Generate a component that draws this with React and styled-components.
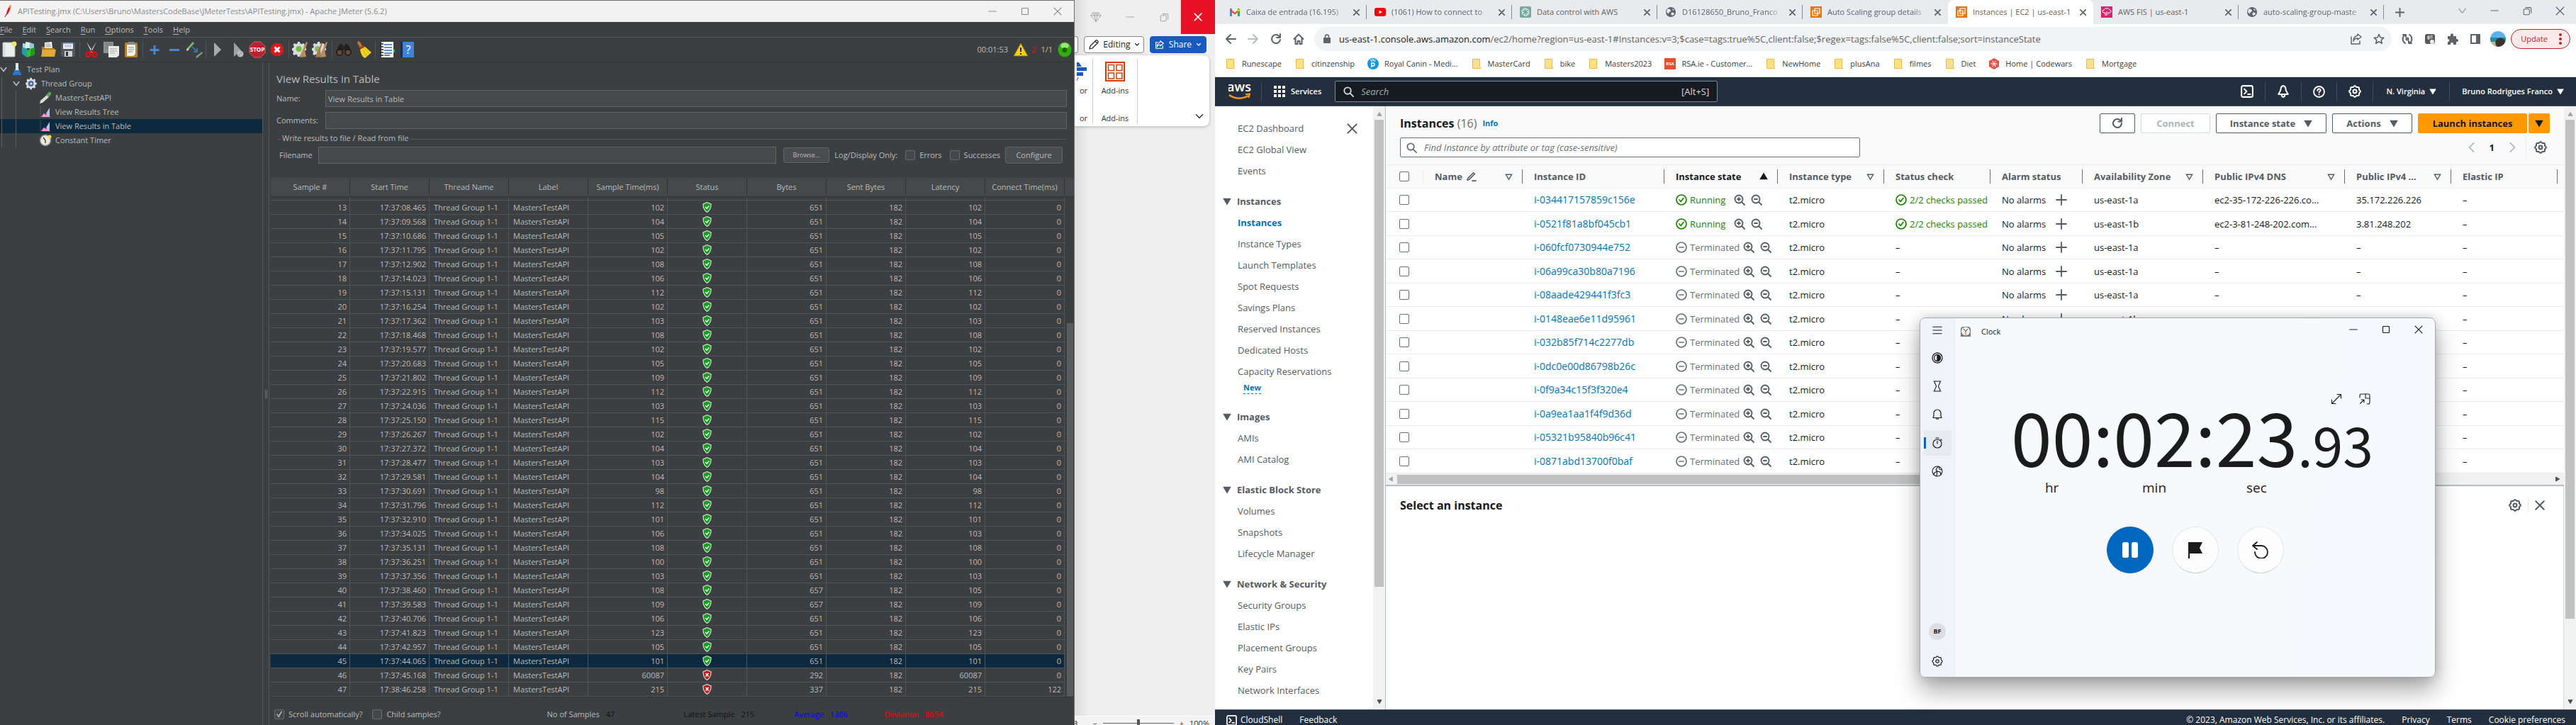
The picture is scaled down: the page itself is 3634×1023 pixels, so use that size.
import React from "react";
import styled, { createGlobalStyle, css } from "styled-components";

const GlobalStyle = createGlobalStyle`
  *, *::before, *::after { box-sizing: border-box; }
  body { margin: 0; font-family: "Open Sans", "Noto Sans", sans-serif; }
  button, input { font: inherit; color: inherit; }
  button { padding: 0; border: 0; background: none; cursor: pointer; white-space: nowrap; }
  a { color: inherit; text-decoration: none; white-space: nowrap; }
  svg { display: block; flex: none; }
`;

/* ---------- shared ---------- */

const Desktop = styled.div`
  display: grid;
  grid-template-columns: 1516fr 198fr 1920fr;
  height: 100vh;
  overflow: hidden;
  background: #eee;
`;

const Spacer = styled.div`
  flex: 1;
`;

const Stroke = ({ size = 16, w = 1.5, color = "currentColor", children, box = 16, join = "round" }) => (
  <svg width={size} height={size} viewBox={`0 0 ${box} ${box}`} fill="none" stroke={color} strokeWidth={w} strokeLinecap="round" strokeLinejoin={join} aria-hidden="true">
    {children}
  </svg>
);

const CrossIcon = ({ size = 10, w = 1.2 }) => (
  <Stroke size={size} w={w}><path d="M1.5 1.5l13 13M14.5 1.5l-13 13" vectorEffect="non-scaling-stroke" /></Stroke>
);
const MinIcon = () => <Stroke size={12} w={1.4}><path d="M1 8h14" /></Stroke>;
const MaxIcon = () => <Stroke size={12} w={1.5}><rect x="2" y="2" width="12" height="12" rx="1" /></Stroke>;
const RestoreIcon = () => (
  <Stroke size={13} w={1.3}><rect x="1.5" y="4.5" width="10" height="10" rx="2" /><path d="M5 2h7.5a2 2 0 0 1 2 2v7.5" /></Stroke>
);

const gearOutline = (() => {
  const pts = [];
  for (let i = 0; i <= 96; i += 1) {
    const a = (i / 96) * Math.PI * 2;
    const r = 6.4 + 0.6 * Math.cos(8 * a);
    pts.push(`${(8 + r * Math.cos(a)).toFixed(2)} ${(8 + r * Math.sin(a)).toFixed(2)}`);
  }
  return `M${pts.join("L")}Z`;
})();
const GearIcon = ({ size = 18, w = 1.8 }) => (
  <Stroke size={size} w={w}><path d={gearOutline} /><circle cx="8" cy="8" r="2.2" /></Stroke>
);

/* ---------- JMeter ---------- */

const JMeter = styled.section`
  display: flex;
  flex-direction: column;
  min-width: 0;
  overflow: hidden;
  border-right: 1px solid #6d6d6d;
  background: #3c3f41;
  color: #bbb;
  font-size: 11px;
  line-height: 16px;
`;

const JTitle = styled.header`
  display: flex;
  align-items: center;
  height: 31px;
  padding-left: 4px;
  border-top: 1px solid #6d6d6d;
  background: #f2f2f2;
  color: #8a8a8a;
`;

const JTitleText = styled.span`
  margin-left: 6px;
`;

const WinButton = styled.button`
  display: flex;
  align-items: center;
  justify-content: center;
  width: 46px;
  height: ${(p) => p.$h || 30}px;
`;

const JMenu = styled.nav`
  display: flex;
  gap: 14px;
  height: 22px;
  border-bottom: 1px solid #555759;
  u { text-underline-offset: 2px; }
`;

const JToolbar = styled.div`
  display: flex;
  align-items: center;
  height: 35px;
  border-bottom: 1px solid #323435;
`;

const ToolGroup = styled.div`
  display: flex;
  & + & {
    margin-left: 2px;
    padding-left: 2px;
    border-left: 1px solid #515355;
  }
  &:first-child { margin-left: -2px; }
`;

const ToolButton = styled.button`
  display: flex;
  align-items: center;
  justify-content: center;
  width: 28px;
  height: 24px;
`;

const RunInfo = styled.div`
  display: flex;
  align-items: center;
  gap: 7px;
  margin-left: auto;
  padding-right: 3px;
`;

const ErrorCount = styled.span`
  margin-left: -3px;
  color: #f00;
`;

const JBody = styled.div`
  display: flex;
  flex: 1;
  min-height: 0;
`;

const Tree = styled.ul`
  width: 371px;
  margin: 0;
  padding: 0;
  border-right: 1px solid #555759;
  list-style: none;
`;

const TreeRow = styled.li`
  display: flex;
  align-items: center;
  height: 20px;
  background: ${(p) => (p.$on ? "#0d293e" : "none")};
`;

const Indent = styled.span`
  align-self: stretch;
  display: flex;
  align-items: center;
  width: ${(p) => p.$w}px;
  ${(p) => p.$line && css`
    margin-left: 2px;
    border-left: 1px solid #5a5d5f;
  `}
`;

const TreeIcon = styled.span`
  display: flex;
  justify-content: center;
  width: 24px;
  margin-right: 2px;
`;

const Splitter = styled.div`
  display: flex;
  align-items: center;
  justify-content: center;
  width: 9px;
  border-right: 1px solid #555759;
  &::before {
    content: "";
    width: 3px;
    height: 12px;
    border: solid #6f7274;
    border-width: 0 1px;
  }
`;

const Panel = styled.div`
  display: flex;
  flex: 1;
  flex-direction: column;
  min-width: 0;
`;

const PanelHeading = styled.h1`
  margin: 12px 10px 5px;
  font-size: 15px;
  font-weight: 400;
  line-height: 22px;
`;

const FieldRow = styled.label`
  display: flex;
  align-items: center;
  height: 24px;
  margin: 0 10px 7px;
`;

const FieldName = styled.span`
  width: ${(p) => p.$w}px;
`;

const JInput = styled.input`
  flex: 1;
  min-width: 0;
  height: 24px;
  padding: 0 3px;
  border: 1px solid #646464;
  background: #45494a;
  outline: none;
`;

const FileGroup = styled.fieldset`
  min-width: 0;
  margin: -2px 12px 20px 12px;
  padding: 2px 4px 0 2px;
  border: 0;
  border-top: 1px solid #555759;
  legend {
    height: 18px;
    margin-left: 2px;
    padding: 0 2px;
  }
`;

const FileRow = styled.div`
  display: flex;
  align-items: center;
  height: 24px;
`;

const FileLabel = styled.label`
  display: flex;
  flex: 1;
  align-items: center;
`;

const JButton = styled.button`
  width: ${(p) => (p.$small ? 65 : 81)}px;
  height: ${(p) => (p.$small ? 22 : 24)}px;
  margin: ${(p) => (p.$small ? "0 7px 0 10px" : "0 0 0 7px")};
  border: 1px solid #646464;
  border-radius: 3px;
  box-shadow: 0 1px 0 #2f3132;
  background: #4a4d4f;
  font-size: ${(p) => (p.$small ? 9 : 11)}px;
`;

const CheckLabel = styled.label`
  display: flex;
  align-items: center;
  gap: 6px;
  margin-left: ${(p) => p.$gap || 11}px;
  white-space: nowrap;
`;

const JCheck = styled.input`
  appearance: none;
  width: 14px;
  height: 14px;
  margin: 0;
  border: 1px solid #6b6b6b;
  border-radius: 2px;
  background: #43494a;
  &:checked::before {
    content: "";
    display: block;
    width: 12px;
    height: 12px;
    background: #bbb;
    clip-path: polygon(16% 48%, 26% 42%, 40% 66%, 74% 10%, 84% 16%, 42% 90%);
  }
`;

const TableArea = styled.div`
  display: flex;
  padding-left: 2px;
`;

const Results = styled.table`
  flex: 1;
  width: 100%;
  border-collapse: separate;
  border-spacing: 0;
  table-layout: fixed;
  th {
    height: 27px;
    padding: 0;
    border-right: 1px solid #323435;
    border-bottom: 1px solid #323435;
    background: #45494a;
    font-weight: 400;
    white-space: nowrap;
  }
  td {
    height: 20px;
    padding: 0 4px;
    border-right: 1px solid #515456;
    border-bottom: 1px solid #515456;
    text-align: right;
    white-space: nowrap;
  }
  td:nth-child(3), td:nth-child(4) { padding-left: 6px; text-align: left; }
  svg { margin: 0 auto; }
`;

const GapRow = styled.tr`
  && td { height: 5px; padding: 0; }
`;

const ResultRow = styled.tr`
  background: ${(p) => (p.$on ? "#0d293e" : "none")};
`;

const ResultsRail = styled.div`
  display: flex;
  flex: none;
  flex-direction: column;
  justify-content: flex-end;
  width: 13px;
  background: linear-gradient(#45494a 26px, #323435 26px 27px, #3c3f41 27px);
  &::after {
    content: "";
    width: 9px;
    height: 72%;
    margin-left: 3px;
    background: #585b5d;
  }
`;

const JFooter = styled.footer`
  display: flex;
  flex: 1;
  align-items: center;
  padding: 9px 0 0 6px;
  border-top: 1px solid #323435;
`;

const Stats = styled.dl`
  display: flex;
  margin: 0 0 0 150px;
`;

const Stat = styled.div`
  display: flex;
  gap: 9px;
  width: ${(p) => p.$w}px;
  color: ${(p) => p.$c};
  dt { color: ${(p) => p.$label || "inherit"}; }
  dd { margin: 0; }
`;

const T = ({ children }) => <svg width="24" height="24" viewBox="0 0 24 24" aria-hidden="true">{children}</svg>;
const broom = "M20 1l2 1-4 11 2 9-9 1 1-4 3-7z";
const cog = "M8 1h3l.6 2.4 2 .8L16 3l2 2-1.2 2.3.8 2L20 10v3l-2.4.6-.8 2L18 18l-2 2-2.3-1.2-2 .8L11 22H8l-.6-2.4-2-.8L3 20l-2-2 1.2-2.3-.8-2L0 13v-3l2-.6.8-2L1.5 5 3.5 3l2.3 1.2 1.6-.8z";
const tools = [
  [
    ["New", <T><rect x="4" y="2" width="17" height="20" rx="1" fill="#eceded" stroke="#bbb" /><path d="M6 4h1v16H6z" fill="#c9cbcb" /><circle cx="20" cy="4" r="3.5" fill="#f3e56a" /></T>],
    ["Templates", <T><path d="M4 3l6 1v14l-6-4z" fill="#a9dcdc" /><path d="M8 1l7 1v8H8z" fill="#d7efef" /><path d="M14 2l6 2v7l-6 1z" fill="#8fc9cf" /><path d="M3 8l7 3v12l-7-5z" fill="#1c9fb0" /><path d="M10 13l11-4v10l-11 4z" fill="#35c12e" /><path d="M15 11l6-2v10l-6 2z" fill="#1f9a1c" /></T>],
    ["Open", <T><path d="M3 8h6l2 2h10v11H3z" fill="#b97e1d" /><path d="M7 2l10-1 1 9H7z" fill="#f5f5f5" /><path d="M8 4h7M8 6h8M8 8h8" stroke="#999" /><path d="M2 22l2-10h19l-2 10z" fill="#e3a838" /></T>],
    ["Save", <T><path d="M2 2h20v20H4l-2-2z" fill="#55595c" /><path d="M5 2h14v9H5z" fill="#eef2f5" /><path d="M5 2h14v2H5z" fill="#7c9ec4" /><path d="M7 6h10M7 8h10" stroke="#aab" /><path d="M7 14h11v8H7z" fill="#cfd2d4" /><path d="M9 15h3v6H9z" fill="#333" /></T>],
  ],
  [
    ["Cut", <T><path d="M5 1l9 14-2 1z" fill="#e8e8e8" /><path d="M19 1l-9 14 2 1z" fill="#c5c8ca" /><circle cx="7.5" cy="19" r="3" fill="none" stroke="#d11" strokeWidth="2.5" /><circle cx="16.5" cy="19" r="3" fill="none" stroke="#d11" strokeWidth="2.5" /><path d="M9 16l3-3 3 3" stroke="#d11" strokeWidth="2" fill="none" /></T>],
    ["Copy", <T><path d="M1 1h14v16H1z" fill="#8f9293" /><path d="M3 4h10M3 7h10M3 10h5" stroke="#6d7071" /><path d="M8 7h15v13l-3 3H8z" fill="#e9eae6" /><path d="M10 11h10M10 14h10M10 17h7" stroke="#a2a59f" /></T>],
    ["Paste", <T><rect x="3" y="2" width="18" height="21" rx="2" fill="#b9802b" /><path d="M6 5h12v13l-3 3H6z" fill="#f3f3ee" /><path d="M8 1h8v4H8z" fill="#888b8c" /><path d="M8 9h8M8 12h8M8 15h6" stroke="#888" /></T>],
  ],
  [
    ["Expand all", <T><path d="M12 6v13M5.5 12.5h13" stroke="#4a86cf" strokeWidth="3" /></T>],
    ["Collapse all", <T><path d="M5 12.5h14" stroke="#4a86cf" strokeWidth="3" /></T>],
    ["Toggle", <T><path d="M10 1l2 2-8 9-3 1 1-3z" fill="#7db66a" /><path d="M2 10l3 2-4 2z" fill="#ddd" /><path d="M23 15l1 2-7 6-3 1 1-3z" fill="#7a9a70" /><path d="M9 8l7 7M16 10v5h-5" stroke="#3d7dc8" strokeWidth="1.5" fill="none" /></T>],
  ],
  [
    ["Start", <T><path d="M7 2l10 10L7 22z" fill="#a9abac" /></T>],
    ["Start no pauses", <T><path d="M7 2l10 11-10 9z" fill="#9fa1a2" /><circle cx="16" cy="18" r="4.5" fill="#bcbebf" /><path d="M13 21l6-6" stroke="#8b8d8e" /></T>],
    ["Stop", <T><path d="M7.5 1h9L23 7.5v9L16.5 23h-9L1 16.5v-9z" fill="#bf1e2d" stroke="#d77" strokeWidth=".8" /><text x="12" y="15" textAnchor="middle" fontSize="8" fontWeight="700" fill="#fff">STOP</text></T>],
    ["Shutdown", <T><path d="M8 3h8l5 5v8l-5 5H8l-5-5V8z" fill="#d31b1b" /><path d="M8.5 8.5l7 7M15.5 8.5l-7 7" stroke="#fff" strokeWidth="3" /></T>],
  ],
  [
    ["Clear", <T><path d={cog} fill="#d9dbdc" /><circle cx="9.5" cy="11" r="4" fill="#74bb3d" /><path d={broom} fill="#b98d5c" /></T>],
    ["Clear all", <T><path d={cog} fill="#d9dbdc" /><circle cx="8" cy="11" r="4" fill="#8db76b" /><path d={broom} fill="#b98d5c" /><path d="M14 2l1 1-3 9 1 10-8 1 1-4 3-7z" fill="#a87d4d" /></T>],
  ],
  [
    ["Search", <T><path d="M4 8l3-4h3l1 3h2l1-3h3l3 4 3 8-6 3-4-7h-2l-4 7-6-3z" fill="#26211e" /><circle cx="6" cy="16" r="4" fill="#6d4a30" stroke="#1c1815" strokeWidth="1.5" /><circle cx="18" cy="16" r="4" fill="#6d4a30" stroke="#1c1815" strokeWidth="1.5" /></T>],
    ["Reset search", <T><path d="M4 0l3 1 4 8-3 2-5-8z" fill="#b9772b" /><path d="M6 9l6-3 2 3-6 4z" fill="#c2302a" /><path d="M7 12l7-4 9 8-9 8c-4-2-6-6-7-12z" fill="#f2d51b" /><path d="M11 12l5 9M13 10l7 7" stroke="#c9a70f" /></T>],
  ],
  [
    ["Function helper", <T><rect x="4" y="1" width="17" height="22" fill="#fff" /><path d="M8 5h11M8 9h11M8 13h11M8 17h11M8 20h8" stroke="#3568b8" strokeWidth="1.5" /><path d="M2 4h5M2 8h5M2 12h5M2 16h5M2 20h5" stroke="#222" strokeWidth="1.5" /><path d="M21 12h2v4h-2z" fill="#39b54a" /></T>],
    ["Help", <T><path d="M3 1h3v22H3z" fill="#1d2d49" /><path d="M6 1h16v22H6z" fill="#3f83d8" /><text x="14" y="18" textAnchor="middle" fontSize="16" fill="#fff">?</text></T>],
  ],
];

const Feather = () => (
  <svg width="15" height="18" viewBox="0 0 15 18" aria-hidden="true">
    <path d="M11 0c1 2 0 6-2 9-1 3-3 5-4 5 0-3 1-7 3-10 1-2 2-4 3-4z" fill="#d22128" />
    <path d="M11 0c1 2 1 4 0 5-2 0-2-1-2-2 0-1 1-3 2-3z" fill="#f59b2d" />
    <path d="M5 13l-2 4" stroke="#5b1c8c" />
  </svg>
);
const Chevron = () => <Stroke size={10} w={2.6}><path d="M2 4l6 8 6-8" /></Stroke>;
const Flask = () => <svg width="14" height="18" viewBox="0 0 14 18" aria-hidden="true"><path d="M5 0h4v8l4 9H1l4-9z" fill="#d6e6f4" /><path d="M4 10h6l3 7H1z" fill="#1f78d6" /></svg>;
const Cogwheel = () => <svg width="18" height="18" viewBox="0 0 20 23" aria-hidden="true"><path d={cog} fill="#d9dbdc" /><circle cx="9.5" cy="11.5" r="5" fill="#3e6aa3" /><path d="M8.5 9l4 2.5-4 2.5z" fill="#fff" /></svg>;
const Dropper = () => <svg width="18" height="18" viewBox="0 0 18 18" aria-hidden="true"><path d="M11 5l3 3-9 8-4 1 1-4z" fill="#d8dcd8" /><path d="M10 5l4-4c2-1 4 1 3 3l-3 4z" fill="#58a84a" /></svg>;
const ChartIcon = () => <svg width="16" height="16" viewBox="0 0 16 16" aria-hidden="true"><path d="M1 0v15h15" stroke="#777" fill="none" strokeDasharray="1 1" /><path d="M2 15l4-5 3 2 5-4v7z" fill="#f29ad0" /><path d="M9 10l5-8v10l-3 1z" fill="#a9c8f5" /><path d="M2 15l4-5 3 2" stroke="#d84aa5" fill="none" /></svg>;
const TimerIcon = () => <svg width="18" height="18" viewBox="0 0 18 18" aria-hidden="true"><circle cx="9" cy="9" r="7.5" fill="#ece9dd" stroke="#8d8f90" strokeWidth="1.5" /><path d="M6 5l3 4v4" stroke="#444" fill="none" strokeWidth="1.5" /><circle cx="15" cy="4" r="2.5" fill="#f3df4a" /></svg>;

const tree = [
  [0, "Test Plan", <Flask />],
  [1, "Thread Group", <Cogwheel />],
  [2, "MastersTestAPI", <Dropper />],
  [2, "View Results Tree", <ChartIcon />],
  [2, "View Results in Table", <ChartIcon />, true],
  [2, "Constant Timer", <TimerIcon />],
];

const Shield = ({ ok }) => (
  <svg width="13" height="15" viewBox="0 0 13 15" role="img" aria-label={ok ? "Success" : "Error"}>
    <path d="M6.5.5L12 3c.3 5-1.5 9-5.5 11.500C2.5 12 .7 8 1 3z" fill={ok ? "#0fa01a" : "#c4161c"} stroke="#d8dcd8" strokeWidth="1.2" />
    {ok ? <path d="M4 7l2 2.200L9.300 5.500" stroke="#fff" strokeWidth="1.5" fill="none" /> : <path d="M4.5 5l4 4.500M8.500 5l-4 4.500" stroke="#fff" strokeWidth="1.5" />}
  </svg>
);

const samples = [
  ["08.465", 102], ["09.568", 104], ["10.686", 105], ["11.795", 102], ["12.902", 108], ["14.023", 106], ["15.131", 112],
  ["16.254", 102], ["17.362", 103], ["18.468", 108], ["19.577", 102], ["20.683", 105], ["21.802", 109], ["22.915", 112],
  ["24.036", 103], ["25.150", 115], ["26.267", 102], ["27.372", 104], ["28.477", 103], ["29.581", 104], ["30.691", 98],
  ["31.796", 112], ["32.910", 101], ["34.025", 106, 651, 103], ["35.131", 108], ["36.251", 100], ["37.356", 103],
  ["38.460", 108, 657, 105], ["39.583", 109, 657], ["40.706", 106], ["41.823", 123], ["42.957", 105], ["44.065", 101],
  ["45.168", 60087, 292], ["17:38:46.258", 215, 337, 215, 122],
];

const resultHeads = ["Sample #", "Start Time", "Thread Name", "Label", "Sample Time(ms)", "Status", "Bytes", "Sent Bytes", "Latency", "Connect Time(ms)"];

function JMeterWindow() {
  return (
    <JMeter>
      <JTitle>
        <Feather />
        <JTitleText>{"APITesting.jmx (C:\\Users\\Bruno\\MastersCodeBase\\JMeterTests\\APITesting.jmx) - Apache JMeter (5.6.2)"}</JTitleText>
        <Spacer />
        <WinButton aria-label="Minimize"><MinIcon /></WinButton>
        <WinButton aria-label="Maximize"><MaxIcon /></WinButton>
        <WinButton aria-label="Close"><CrossIcon size={12} /></WinButton>
      </JTitle>
      <JMenu>
        {["File", "Edit", "Search", "Run", "Options", "Tools", "Help"].map((m) => <button key={m}><u>{m[0]}</u>{m.slice(1)}</button>)}
      </JMenu>
      <JToolbar>
        {tools.map((g, i) => (
          <ToolGroup key={i}>
            {g.map(([name, icon]) => <ToolButton key={name} aria-label={name}>{icon}</ToolButton>)}
          </ToolGroup>
        ))}
        <RunInfo>
          <span>00:01:53</span>
          <svg width="22" height="20" viewBox="0 0 22 20" aria-hidden="true"><path d="M11 1l10 18H1z" fill="#f4cf13" stroke="#8a7408" strokeLinejoin="round" /><path d="M11 7v6M11 15v2" stroke="#222" strokeWidth="2" /></svg>
          <ErrorCount>2</ErrorCount>
          <span>1/1</span>
          <svg width="20" height="22" viewBox="0 0 20 22" aria-hidden="true"><ellipse cx="10" cy="11" rx="9.5" ry="10.5" fill="#2fae0c" /><ellipse cx="10" cy="5.5" rx="6" ry="4" fill="#9be37c" /><circle cx="10" cy="11.5" r="3.5" fill="#176a08" /></svg>
        </RunInfo>
      </JToolbar>
      <JBody>
        <Tree>
          {tree.map(([depth, name, icon, on]) => (
            <TreeRow key={name} $on={on}>
              {depth > 0 && <Indent $w={depth === 1 ? 16 : 18} $line />}
              {depth > 1 && <Indent $w={30} $line />}
              {depth < 2 && <Indent $w={depth ? 14 : 12}><Chevron /></Indent>}
              <TreeIcon>{icon}</TreeIcon>
              {name}
            </TreeRow>
          ))}
        </Tree>
        <Splitter />
        <Panel>
          <PanelHeading>View Results in Table</PanelHeading>
          <FieldRow><FieldName $w={69}>Name:</FieldName><JInput defaultValue="View Results in Table" /></FieldRow>
          <FieldRow><FieldName $w={69}>Comments:</FieldName><JInput /></FieldRow>
          <FileGroup>
            <legend>Write results to file / Read from file</legend>
            <FileRow>
              <FileLabel><FieldName $w={55}>Filename</FieldName><JInput /></FileLabel>
              <JButton $small>Browse...</JButton>
              <span>Log/Display Only:</span>
              <CheckLabel><JCheck type="checkbox" />Errors</CheckLabel>
              <CheckLabel><JCheck type="checkbox" />Successes</CheckLabel>
              <JButton>Configure</JButton>
            </FileRow>
          </FileGroup>
          <TableArea>
            <Results>
              <thead><tr>{resultHeads.map((h) => <th key={h}>{h}</th>)}</tr></thead>
              <tbody>
                <GapRow>{resultHeads.map((h) => <td key={h} />)}</GapRow>
                {samples.map(([t, time, bytes = 651, latency = time, connect = 0], i) => (
                  <ResultRow key={t} $on={i === 32}>
                    <td>{i + 13}</td>
                    <td>{t.length > 6 ? t : `17:37:${t}`}</td>
                    <td>Thread Group 1-1</td>
                    <td>MastersTestAPI</td>
                    <td>{time}</td>
                    <td><Shield ok={i < 33} /></td>
                    <td>{bytes}</td>
                    <td>182</td>
                    <td>{latency}</td>
                    <td>{connect}</td>
                  </ResultRow>
                ))}
              </tbody>
            </Results>
            <ResultsRail />
          </TableArea>
          <JFooter>
            <CheckLabel $gap={1}><JCheck type="checkbox" defaultChecked />Scroll automatically?</CheckLabel>
            <CheckLabel $gap={14}><JCheck type="checkbox" />Child samples?</CheckLabel>
            <Stats>
              <Stat $w={193} $c="#111" $label="#bbb"><dt>No of Samples</dt><dd>47</dd></Stat>
              <Stat $w={156} $c="#111"><dt>Latest Sample</dt><dd>215</dd></Stat>
              <Stat $w={127} $c="#00f"><dt>Average</dt><dd>1386</dd></Stat>
              <Stat $w={90} $c="#f00"><dt>Deviation</dt><dd>8654</dd></Stat>
            </Stats>
          </JFooter>
        </Panel>
      </JBody>
    </JMeter>
  );
}

/* ---------- Word strip ---------- */

const Word = styled.section`
  display: flex;
  flex-direction: column;
  min-width: 0;
  overflow: hidden;
  background: linear-gradient(90deg, #dcdcdc, #efefef 20px);
  color: #333;
  font-size: 11px;
  line-height: 16px;
`;

const WordTitle = styled.header`
  display: flex;
  justify-content: flex-end;
  height: 48px;
  color: #aaa;
`;

const WordWinButton = styled.button`
  display: flex;
  align-items: center;
  justify-content: center;
  width: 48px;
  background: ${(p) => (p.$close ? "#e81123" : "none")};
  color: ${(p) => (p.$close ? "#fff" : "inherit")};
`;

const WordActions = styled.div`
  display: flex;
  gap: 8px;
  height: 24px;
  margin: 3px 12px 3px 0;
  &::before {
    content: "";
    width: 5px;
    border: 1px solid #888;
    border-left: 0;
    border-radius: 0 4px 4px 0;
    background: #fff;
  }
`;

const WordButton = styled.button`
  display: flex;
  flex: ${(p) => (p.$blue ? 80 : 85)};
  align-items: center;
  justify-content: space-evenly;
  border: 1px solid ${(p) => (p.$blue ? "#185abd" : "#888")};
  border-radius: 4px;
  background: ${(p) => (p.$blue ? "#185abd" : "#fff")};
  color: ${(p) => (p.$blue ? "#fff" : "#222")};
  font-size: 12px;
`;

const Ribbon = styled.div`
  display: flex;
  height: 100px;
  margin-right: 8px;
  padding: 5px 0;
  border-radius: 0 8px 8px 0;
  box-shadow: 0 1px 4px rgba(0, 0, 0, 0.25);
  background: #fff;
`;

const RibbonGroup = styled.div`
  display: flex;
  flex-direction: column;
  justify-content: space-between;
  align-items: center;
  width: ${(p) => p.$w}px;
  height: 92px;
  border-right: 1px solid #d0d0d0;
`;

const RibbonButton = styled.button`
  display: flex;
  flex-direction: column;
  align-items: center;
  gap: 5px;
  padding-top: 4px;
`;

const RibbonToggle = styled.button`
  align-self: flex-end;
  margin: 0 8px 3px auto;
`;

const WordStatus = styled.footer`
  display: flex;
  align-items: center;
  gap: 8px;
  height: 13px;
  margin-top: auto;
  padding: 7px 8px 0 0;
  border-top: 1px solid #fff;
  background: #f3f3f3;
`;

const ZoomTrack = styled.input`
  appearance: none;
  flex: 0 1 100px;
  min-width: 0;
  height: 1px;
  margin: 0;
  background: #666;
  &::-webkit-slider-thumb {
    appearance: none;
    width: 4px;
    height: 12px;
    background: #555;
  }
`;

function WordWindow() {
  const caret = <Stroke size={8} w={2.4}><path d="M3 5l5 5 5-5" /></Stroke>;
  return (
    <Word>
      <WordTitle>
        <WordWinButton aria-label="Premium"><Stroke size={16} w={1}><path d="M4 2h8l3 4-7 9-7-9zM1 6h14M4 2l2 4 2 9 2-9 2-4M6 6l2-4 2 4" /></Stroke></WordWinButton>
        <WordWinButton aria-label="Minimize"><MinIcon /></WordWinButton>
        <WordWinButton aria-label="Restore"><RestoreIcon /></WordWinButton>
        <WordWinButton $close aria-label="Close"><CrossIcon size={12} w={1.5} /></WordWinButton>
      </WordTitle>
      <WordActions>
        <WordButton><Stroke size={16} w={1.2}><path d="M2 14l1-4 8-8c1-1 4 1 3 3l-8 8zM10 3l3 3" /></Stroke>Editing{caret}</WordButton>
        <WordButton $blue><Stroke size={14} w={1.4}><path d="M5 4H2v10h11v-4M9 2l5 4-5 4V8c-3 0-4 1-5 3 0-4 2-6 5-7z" /></Stroke>Share{caret}</WordButton>
      </WordActions>
      <Ribbon>
        <RibbonGroup $w={26}>
          <RibbonButton>
            <svg width="20" height="28" viewBox="0 0 20 28" aria-hidden="true"><path d="M0 1h3l4 6H0zM0 8h14v5H0zM0 15h9v5H0z" fill="#185abd" /><path d="M0 27l2-5" stroke="#555" /></svg>
            or
          </RibbonButton>
          <span>or</span>
        </RibbonGroup>
        <RibbonGroup $w={63}>
          <RibbonButton>
            <Stroke size={28} box={28} w={2} color="#d83b01" join="miter"><path d="M1 1h26v26H1z" /><path d="M4.5 4.5h8v8h-8zM16 4.5h8v8h-8zM4.5 16h8v8h-8zM16 16h8v8h-8z" strokeWidth="1.5" /></Stroke>
            Add-ins
          </RibbonButton>
          <span>Add-ins</span>
        </RibbonGroup>
        <RibbonToggle aria-label="Collapse ribbon"><Stroke size={12} w={2}><path d="M2 5l6 6 6-6" /></Stroke></RibbonToggle>
      </Ribbon>
      <WordStatus>
        <Stroke size={8} w={2}><path d="M0 2h6v12H0M0 8h4" /></Stroke>
        <Spacer />
        <span>−</span>
        <ZoomTrack type="range" aria-label="Zoom" />
        <span>+</span>
        <span>100%</span>
      </WordStatus>
    </Word>
  );
}

/* ---------- Chrome frame ---------- */

const Chrome = styled.section`
  position: relative;
  display: flex;
  flex-direction: column;
  min-width: 0;
  overflow: hidden;
  background: #fff;
  color: #5f6368;
  font-size: 11px;
  line-height: 16px;
`;

const TabStrip = styled.div`
  display: flex;
  height: 34px;
  padding-left: 9px;
  background: #e8eaed;
`;

const Tab = styled.div`
  display: flex;
  flex: 0 1 205px;
  align-items: center;
  gap: 8px;
  min-width: 0;
  padding: 0 10px 0 11px;
  border-radius: ${(p) => (p.$active ? "8px 8px 0 0" : 0)};
  background: ${(p) => (p.$active ? "#fff" : `linear-gradient(${p.$plain ? "transparent, transparent" : "#85898d, #85898d"}) 100% 50% / 1px 20px no-repeat`)};
`;

const TabTitle = styled.button`
  flex: 1;
  min-width: 0;
  overflow: hidden;
  text-align: left;
  mask-image: ${(p) => (p.$fade ? "linear-gradient(90deg, #000 88%, rgba(0, 0, 0, 0.15))" : "none")};
`;

const TabClose = styled.button`
  padding-left: ${(p) => (p.$near ? 0 : 5)}px;
`;

const NewTab = styled.button`
  width: 44px;
  display: flex;
  align-items: center;
  justify-content: center;
`;

const AddressBar = styled.div`
  display: flex;
  align-items: center;
  height: 41px;
  padding: 0 8px 0 6px;
`;

const NavButton = styled.button`
  display: flex;
  align-items: center;
  justify-content: center;
  width: 32px;
  height: 32px;
  color: ${(p) => (p.$dim ? "#babcbe" : "#5f6368")};
`;

const Omnibox = styled.div`
  display: flex;
  flex: 1;
  align-items: center;
  height: 34px;
  margin: 0 6px;
  padding: 0 2px 0 11px;
  border-radius: 17px;
  background: #f1f3f4;
  font-size: 13px;
`;

const Url = styled.a`
  flex: 1;
  margin-left: 10px;
  b { color: #202124; font-weight: 400; }
`;

const Avatar = styled.span`
  width: 22px;
  height: 22px;
  margin: 0 7px 0 5px;
  border-radius: 50%;
  background: radial-gradient(circle at 65% 75%, #3a3330 30%, transparent 34%), linear-gradient(#5db1ea 40%, #1f8f9c 40% 70%, #c7b48c 70%);
`;

const UpdateButton = styled.button`
  display: flex;
  align-items: center;
  gap: 16px;
  height: 28px;
  padding: 0 11px 0 13px;
  border: 1px solid #c5221f;
  border-radius: 14px;
  background: #fbeae9;
  color: #c5221f;
`;

const Bookmarks = styled.nav`
  display: flex;
  align-items: center;
  gap: 18px;
  height: 34px;
  padding: 0 14px 4px;
  border-bottom: 1px solid #d5d9d9;
  color: #3c4043;
`;

const Bookmark = styled.a`
  display: flex;
  align-items: center;
  gap: 8px;
`;

const Globe = () => <svg width="16" height="16" viewBox="0 0 16 16" aria-hidden="true"><circle cx="8" cy="8" r="7" fill="#5f6368" /><path d="M3 4c2-1 5 0 5 2S4 8 5 11L2 8zM9 9c2-1 4 0 4 2l-3 2c-2-1-2-3-1-4zM10 3l3 2-2 1z" fill="#e8eaed" /></svg>;
const Ec2Icon = () => <svg width="16" height="16" viewBox="0 0 16 16" aria-hidden="true"><path d="M0 0h16v16H0z" fill="#e8760c" /><path d="M6 3h7v7H6zM3 6h7v7H3z" fill="none" stroke="#fff" strokeWidth="1.2" /></svg>;
const FisIcon = () => <svg width="16" height="16" viewBox="0 0 16 16" aria-hidden="true"><path d="M0 0h16v16H0z" fill="#d6246e" /><path d="M6 13v-4H4a2 2 0 0 1 0-4c1-3 7-3 8 0a2 2 0 0 1 0 4h-2v2M8 13V7" fill="none" stroke="#fff" /></svg>;
const GmailIcon = () => <svg width="16" height="16" viewBox="0 0 16 16" aria-hidden="true"><path d="M1 3h3v11H1z" fill="#4285f4" /><path d="M12 3h3v11h-3z" fill="#34a853" /><path d="M1 3l7 6 7-6v3l-7 5.5L1 6z" fill="#ea4335" /><path d="M12 5l3-2v3l-3 2.5z" fill="#fbbc04" /></svg>;
const TubeIcon = () => <svg width="16" height="16" viewBox="0 0 16 16" aria-hidden="true"><rect y="2" width="16" height="12" rx="3" fill="#f00" /><path d="M6.5 5.5L11 8l-4.5 2.5z" fill="#fff" /></svg>;
const GptIcon = () => <svg width="16" height="16" viewBox="0 0 16 16" aria-hidden="true"><rect width="16" height="16" rx="2" fill="#74aa9c" />{[0, 60, 120, 180, 240, 300].map((a) => <path key={a} transform={`rotate(${a} 8 8)`} d="M8 5.5l2.5-1.5c2 0 2.5 2 2 3.5" fill="none" stroke="#fff" />)}</svg>;
const FolderIcon = () => <svg width="16" height="16" viewBox="0 0 16 16" aria-hidden="true"><path d="M2.5 1.5h10v11l1 .5v1.5h-11z" fill="#ffe08a" stroke="#e5bf45" /></svg>;
const RoyalIcon = () => <svg width="16" height="16" viewBox="0 0 16 16" aria-hidden="true"><circle cx="8" cy="8" r="8" fill="#1597dd" /><path d="M6 13V7h2a2 2 0 0 1 0 4H6M5 2l1 3M8 1v3M11 2l-1 3" fill="none" stroke="#fff" strokeWidth="1.5" /></svg>;
const RsaIcon = () => <svg width="16" height="16" viewBox="0 0 16 16" aria-hidden="true"><path d="M0 0h16v16H0z" fill="#e8502d" /><text x="8" y="10" textAnchor="middle" fontSize="6" fontWeight="700" fill="#fff">RSA</text></svg>;
const CodewarsIcon = () => <svg width="16" height="16" viewBox="0 0 16 16" aria-hidden="true"><path d="M8 0l7 4v8l-7 4-7-4V4z" fill="#ef4f45" />{[0, 60, 120, 180, 240, 300].map((a) => <path key={a} transform={`rotate(${a} 8 8)`} d="M8 8c0-2 1-3 3-3.500" fill="none" stroke="#fff" />)}</svg>;

const tabs = [
  [<GmailIcon />, "Caixa de entrada (16.195)", "", true],
  [<TubeIcon />, "(1061) How to connect to", "", true],
  [<GptIcon />, "Data control with AWS"],
  [<Globe />, "D16128650_Bruno_Franco", "", true],
  [<Ec2Icon />, "Auto Scaling group details", "plain", true],
  [<Ec2Icon />, "Instances | EC2 | us-east-1", "active"],
  [<FisIcon />, "AWS FIS | us-east-1"],
  [<Globe />, "auto-scaling-group-maste", "", true],
];

const bookmarks = [
  ["Runescape"], ["citinzenship"], ["Royal Canin - Medi...", <RoyalIcon />], ["MasterCard"], ["bike"], ["Masters2023"],
  ["RSA.ie - Customer...", <RsaIcon />], ["NewHome"], ["plusAna"], ["filmes"], ["Diet"], ["Home | Codewars", <CodewarsIcon />], ["Mortgage"],
];

/* ---------- AWS console ---------- */

const AwsNav = styled.nav`
  display: flex;
  align-items: center;
  height: 41px;
  padding-left: 18px;
  border-bottom: 1px solid #414d5c;
  background: #232f3e;
  color: #fff;
  font-weight: 600;
`;

const NavItem = styled.button`
  display: flex;
  align-items: center;
  justify-content: center;
  gap: ${(p) => p.$gap || 8}px;
  height: 27px;
  padding: 0 ${(p) => p.$pad ?? 16}px;
  border-left: 1px solid ${(p) => (p.$first ? "transparent" : "#414d5c")};
`;

const Services = styled.div`
  margin: 0 2px 0 14px;
`;

const AwsSearch = styled.label`
  display: flex;
  flex: 0 0 540px;
  align-items: center;
  gap: 10px;
  height: 30px;
  padding: 0 11px;
  border: 1px solid #7d8998;
  border-radius: 2px;
  background: #161b22;
  color: #d5dbdb;
  font-size: 13px;
  font-weight: 400;
  input {
    flex: 1;
    padding: 0;
    border: 0;
    outline: 0;
    background: none;
  }
  input::placeholder { color: #a2acad; font-style: italic; opacity: 1; }
`;

const Console = styled.div`
  display: flex;
  flex: 1;
  min-height: 0;
  color: #16191f;
  font-size: 13px;
`;

const Sidebar = styled.nav`
  width: 223px;
  padding-top: 16px;
  overflow: hidden;
  color: #545b64;
`;

const SideLink = styled.a`
  display: flex;
  align-items: center;
  height: 30px;
  padding: 0 22px 0 32px;
  color: ${(p) => (p.$on ? "#0073bb" : "inherit")};
  font-weight: ${(p) => (p.$on ? 700 : 400)};
`;

const SideTop = styled.div`
  display: flex;
  align-items: center;
  padding-right: 22px;
`;

const SideHeading = styled.button`
  display: flex;
  align-items: center;
  gap: 8px;
  height: 31px;
  margin-top: 12px;
  padding-left: 11px;
  font-weight: 700;
`;

const NewTag = styled.a`
  display: block;
  width: 25px;
  margin: 0 0 16px 40px;
  border-bottom: 1px dashed #0073bb;
  color: #0073bb;
  font-size: 11px;
  font-weight: 700;
`;

const Rail = styled.div`
  display: flex;
  flex-direction: column;
  align-items: center;
  width: 17px;
  padding: 7px 0;
  background: #f1f1f1;
`;

const RailThumb = styled.div`
  flex: ${(p) => p.$grow};
  width: 13px;
  margin: 4px 0 0;
  background: #c1c1c1;
`;

const RailRest = styled.div`
  flex: ${(p) => p.$grow};
`;

const Main = styled.main`
  display: flex;
  flex: 1;
  flex-direction: column;
  min-width: 0;
  border-left: 1px solid #b8bfbf;
`;

const ListHeader = styled.header`
  display: grid;
  gap: 6px;
  padding: 10px 20px;
  border-bottom: 1px solid #eaeded;
  background: #fafafa;
`;

const HeaderRow = styled.div`
  display: flex;
  align-items: center;
  gap: 8px;
  height: 28px;
`;

const Title = styled.h2`
  margin: 0;
  font-size: 16px;
  font-weight: 700;
  span { color: #687078; font-weight: 400; }
`;

const InfoLink = styled.a`
  color: #0073bb;
  font-size: 11px;
  font-weight: 700;
`;

const AwsButton = styled.button`
  display: flex;
  align-items: center;
  justify-content: center;
  gap: 12px;
  width: ${(p) => p.$w}px;
  height: 28px;
  border: 1px solid ${(p) => (p.$kind === "primary" ? "#ff9900" : p.$kind === "off" ? "#d5dbdb" : "#545b64")};
  border-radius: 2px;
  background: ${(p) => (p.$kind === "primary" ? "#ff9900" : "#fff")};
  color: ${(p) => (p.$kind === "primary" ? "#16191f" : p.$kind === "off" ? "#aab7b8" : "#545b64")};
  font-weight: 700;
`;

const SplitButton = styled.div`
  display: flex;
  gap: 2px;
`;

const Filter = styled.label`
  display: flex;
  flex: 0 1 649px;
  align-items: center;
  gap: 10px;
  height: 28px;
  padding: 0 8px;
  border: 1px solid #687078;
  border-radius: 2px;
  background: #fff;
  color: #687078;
  input {
    flex: 1;
    padding: 0;
    border: 0;
    outline: 0;
  }
  input::placeholder { color: #687078; font-style: italic; opacity: 1; }
`;

const Pager = styled.div`
  display: flex;
  align-items: center;
  gap: 18px;
  margin-left: auto;
  padding-right: 4px;
  color: #aab7b8;
  b { color: #16191f; }
`;

const GearSlot = styled.div`
  display: flex;
  align-items: center;
  height: 28px;
  padding: 0 4px 0 11px;
  border-left: 1px solid #eaeded;
  color: #545b64;
`;

const Grid = styled.table`
  width: 100%;
  border-collapse: separate;
  border-spacing: 0;
  table-layout: fixed;
  th, td {
    overflow: hidden;
    padding: 0 0 0 16px;
    border-bottom: 1px solid #eaeded;
    text-align: left;
    white-space: nowrap;
  }
  td { height: 33px; }
  tr:nth-child(even) td { height: 34px; }
  th:first-child, td:first-child { padding-left: 19px; }
  th {
    height: 33px;
    background: linear-gradient(#687078, #687078) 100% 50% / 1px 20px no-repeat #fafafa;
    color: #545b64;
  }
  th:first-child { background: linear-gradient(#eaeded, #eaeded) 100% 50% / 1px 20px no-repeat #fafafa; }
  th:last-child { background: #fafafa; }
`;

const Col = styled.col`
  width: ${(p) => (p.$w ? `${p.$w}px` : "auto")};
`;

const HeadCell = styled.div`
  display: flex;
  align-items: center;
  gap: 6px;
  padding-right: 14px;
  color: ${(p) => (p.$sorted ? "#16191f" : "inherit")};
`;

const AwsCheck = styled.input`
  appearance: none;
  display: block;
  width: 14px;
  height: 14px;
  margin: 0;
  border: 1px solid #687078;
  border-radius: 2px;
  background: #fff;
`;

const InstanceLink = styled.a`
  color: #0073bb;
  font-size: 14px;
`;

const Inline = styled.span`
  display: flex;
  align-items: center;
  gap: ${(p) => p.$gap || 4}px;
  color: ${(p) => p.$c || "inherit"};
`;

const ZoomTools = styled.span`
  display: flex;
  gap: 8px;
  margin-left: ${(p) => (p.$wide ? 8 : 1)}px;
  color: #545b64;
`;

const HRail = styled.div`
  display: flex;
  align-items: center;
  height: 18px;
  padding: 0 5px 0 3px;
  border-bottom: 2px solid #b3bcbc;
  background: #f1f1f1;
`;

const HThumb = styled.div`
  width: 86%;
  height: 13px;
  margin: 0 auto 0 5px;
  background: #c1c1c1;
`;

const Detail = styled.section`
  flex: 1;
  padding: 13px 26px 0 20px;
  border-right: 1px solid #d5dbdb;
`;

const DetailHead = styled.header`
  display: flex;
  align-items: center;
  justify-content: space-between;
  height: 28px;
`;

const DetailTools = styled.div`
  display: flex;
  align-items: center;
  gap: 9px;
  color: #545b64;
`;

const ToolDivider = styled.span`
  width: 1px;
  height: 24px;
  background: #eaeded;
`;

const AwsFooter = styled.footer`
  display: flex;
  align-items: flex-start;
  gap: 24px;
  height: 22px;
  padding: 6px 15px 0 16px;
  overflow: hidden;
  border-top: 1px solid #414d5c;
  background: #232f3e;
  color: #fff;
  font-size: 12px;
`;

const Tri = ({ size = 11, turn = 0, hollow, color = "currentColor" }) => (
  <svg width={size} height={size} viewBox="0 0 12 12" aria-hidden="true">
    <path d="M1.5 2.5h9L6 10z" transform={`rotate(${turn} 6 6)`} fill={hollow ? "none" : color} stroke={color} strokeWidth="1.5" />
  </svg>
);
const SearchIcon = ({ size = 15 }) => <Stroke size={size} w={2}><circle cx="6.5" cy="6.5" r="5" /><path d="M10.5 10.5l4.5 4.5" /></Stroke>;
const ShellIcon = ({ size = 18 }) => <Stroke size={size} w={1.8}><rect x="1" y="1" width="14" height="14" rx="2" /><path d="M4.5 5l3 3-3 3M9 11.5h3" /></Stroke>;
const StateIcon = ({ ok }) => <Stroke w={1.7}><circle cx="8" cy="8" r="7" />{ok ? <path d="M5 8l2.2 2.5L11 5.5" /> : <path d="M5 8h6" />}</Stroke>;
const Magnify = ({ plus }) => <Stroke w={1.8}><circle cx="7" cy="7" r="5.5" /><path d="M11 11l4 4M5 7h4" />{plus && <path d="M7 5v4" />}</Stroke>;
const Arrow = ({ left }) => <Stroke size={14} w={2}><path d={left ? "M11 1L4 8l7 7" : "M5 1l7 7-7 7"} /></Stroke>;

const sideGroups = [
  ["Instances", ["Instances", "Instance Types", "Launch Templates", "Spot Requests", "Savings Plans", "Reserved Instances", "Dedicated Hosts", "Capacity Reservations"]],
  ["Images", ["AMIs", "AMI Catalog"]],
  ["Elastic Block Store", ["Volumes", "Snapshots", "Lifecycle Manager"]],
  ["Network & Security", ["Security Groups", "Elastic IPs", "Placement Groups", "Key Pairs", "Network Interfaces"]],
];

const columns = [
  ["Name", 140, "down"], ["Instance ID", 200], ["Instance state", 160, "sorted"], ["Instance type", 150, "down"], ["Status check", 150],
  ["Alarm status", 130], ["Availability Zone", 170, "down"], ["Public IPv4 DNS", 200, "down"], ["Public IPv4 ...", 150, "down"], ["Elastic IP", 150],
];

const instances = [
  ["i-034417157859c156e", "us-east-1a", "ec2-35-172-226-226.co...", "35.172.226.226"],
  ["i-0521f81a8bf045cb1", "us-east-1b", "ec2-3-81-248-202.com...", "3.81.248.202"],
  ["i-060fcf0730944e752", "us-east-1a"], ["i-06a99ca30b80a7196", "us-east-1a"], ["i-08aade429441f3fc3", "us-east-1a"],
  ["i-0148eae6e11d95961", "us-east-1b"], ["i-032b85f714c2277db"], ["i-0dc0e00d86798b26c"], ["i-0f9a34c15f3f320e4"],
  ["i-0a9ea1aa1f4f9d36d"], ["i-05321b95840b96c41"], ["i-0871abd13700f0baf"],
];

function AwsConsole() {
  return (
    <>
      <AwsNav>
        <NavItem $first $pad={0} aria-label="AWS home">
          <svg width="32" height="28" viewBox="0 0 32 28"><text x="15" y="14" textAnchor="middle" fontSize="18" fontWeight="600" fill="#fff">aws</text><path d="M1 19c8 6 19 6 27 1" stroke="#ff9900" strokeWidth="2.5" fill="none" /><path d="M24 18l6-.5-1.5 5.5" stroke="#ff9900" strokeWidth="2" fill="none" /></svg>
        </NavItem>
        <Services>
          <NavItem $pad={17}>
            <svg width="16" height="16" viewBox="0 0 16 16" fill="#fff" aria-hidden="true">{[0, 6, 12].map((x) => [0, 6, 12].map((y) => <rect key={`${x}-${y}`} x={x} y={y} width="4" height="4" />))}</svg>
            Services
          </NavItem>
        </Services>
        <AwsSearch><SearchIcon /><input placeholder="Search" aria-label="Search" /><span>[Alt+S]</span></AwsSearch>
        <Spacer />
        <NavItem $first aria-label="CloudShell"><ShellIcon /></NavItem>
        <NavItem aria-label="Notifications"><Stroke size={18} w={1.8}><path d="M8 1C5 1 5 4 4.5 7L2 11.5h12L11.5 7C11 4 11 1 8 1zM6 12c0 4 4 4 4 0" /></Stroke></NavItem>
        <NavItem aria-label="Help"><Stroke size={17} w={1.8}><circle cx="8" cy="8" r="7" /><path d="M6 6.5c0-3 4-3 4-.5 0 1.5-2 1.5-2 3M8 11.5v.2" /></Stroke></NavItem>
        <NavItem aria-label="Settings"><GearIcon /></NavItem>
        <NavItem $pad={18} $gap={6}>N. Virginia <Tri size={10} /></NavItem>
        <NavItem $pad={17} $gap={6}>Bruno Rodrigues Franco <Tri size={10} /></NavItem>
      </AwsNav>
      <Console>
        <Sidebar>
          <SideTop><SideLink href="#dash">EC2 Dashboard</SideLink><Spacer /><button aria-label="Close navigation"><CrossIcon size={15} w={2} /></button></SideTop>
          <SideLink href="#global">EC2 Global View</SideLink>
          <SideLink href="#events">Events</SideLink>
          {sideGroups.map(([name, links]) => (
            <React.Fragment key={name}>
              <SideHeading><Tri size={12} />{name}</SideHeading>
              {links.map((l) => <SideLink key={l} href={`#${l}`} $on={l === "Instances"}>{l}</SideLink>)}
              {name === "Instances" && <NewTag href="#new">New</NewTag>}
            </React.Fragment>
          ))}
        </Sidebar>
        <Rail><Tri size={8} turn={180} color="#a3a3a3" /><RailThumb $grow={661} /><RailRest $grow={158} /><Tri size={8} color="#505050" /></Rail>
        <Main>
          <ListHeader>
            <HeaderRow>
              <Title>Instances <span>(16)</span></Title>
              <InfoLink href="#info">Info</InfoLink>
              <Spacer />
              <AwsButton $w={50} aria-label="Refresh"><Stroke size={16} w={2.1}><path d="M14 8a6 6 0 1 1-2-4.5l1.5 1.5M14 1v4.5H9.5" /></Stroke></AwsButton>
              <AwsButton $w={98} $kind="off">Connect</AwsButton>
              <AwsButton $w={156}>Instance state <Tri size={12} /></AwsButton>
              <AwsButton $w={113}>Actions <Tri size={12} /></AwsButton>
              <SplitButton>
                <AwsButton $w={154} $kind="primary">Launch instances</AwsButton>
                <AwsButton $w={30} $kind="primary" aria-label="More launch options"><Tri size={12} /></AwsButton>
              </SplitButton>
            </HeaderRow>
            <HeaderRow>
              <Filter><SearchIcon /><input placeholder="Find Instance by attribute or tag (case-sensitive)" aria-label="Find Instance" /></Filter>
              <Pager><Arrow left /><b>1</b><Arrow /></Pager>
              <GearSlot><GearIcon /></GearSlot>
            </HeaderRow>
          </ListHeader>
          <Grid>
            <colgroup><Col $w={53} />{columns.map(([n, w]) => <Col key={n} $w={w} />)}<Col /></colgroup>
            <thead>
              <tr>
                <th><AwsCheck type="checkbox" aria-label="Select all" /></th>
                {columns.map(([name, , mark]) => (
                  <th key={name}>
                    <HeadCell $sorted={mark === "sorted"}>
                      {name}
                      {name === "Name" && <Stroke size={14} w={1.8}><path d="M1 14l1-3 9-9 2 2-9 9zM9 15h6" /></Stroke>}
                      <Spacer />
                      {mark === "down" && <Tri hollow />}
                      {mark === "sorted" && <Tri size={12} turn={180} />}
                    </HeadCell>
                  </th>
                ))}
                <th />
              </tr>
            </thead>
            <tbody>
              {instances.map(([id, zone, dns, ip], i) => {
                const up = i < 2;
                const blank = i > 4 ? null : "–";
                return (
                  <tr key={id}>
                    <td><AwsCheck type="checkbox" aria-label={id} /></td>
                    <td />
                    <td><InstanceLink href={`#${id}`}>{id}</InstanceLink></td>
                    <td>
                      <Inline $c={up ? "#1d8102" : "#687078"}>
                        <StateIcon ok={up} />{up ? "Running" : "Terminated"}
                        <ZoomTools $wide={up}><Magnify plus /><Magnify /></ZoomTools>
                      </Inline>
                    </td>
                    <td>t2.micro</td>
                    <td>{up ? <Inline $c="#1d8102"><StateIcon ok />2/2 checks passed</Inline> : "–"}</td>
                    <td>{zone && <Inline $gap={14}>No alarms<Stroke w={1.8} color="#545b64"><path d="M8 1v14M1 8h14" /></Stroke></Inline>}</td>
                    <td>{zone}</td>
                    <td>{dns || blank}</td>
                    <td>{ip || blank}</td>
                    <td>–</td>
                    <td />
                  </tr>
                );
              })}
            </tbody>
          </Grid>
          <HRail><Tri size={8} turn={90} color="#a3a3a3" /><HThumb /><Tri size={8} turn={-90} color="#505050" /></HRail>
          <Detail>
            <DetailHead>
              <Title>Select an instance</Title>
              <DetailTools><GearIcon /><ToolDivider /><button aria-label="Close details"><CrossIcon size={14} w={2} /></button></DetailTools>
            </DetailHead>
          </Detail>
        </Main>
        <Rail><Tri size={8} turn={180} color="#a3a3a3" /><RailThumb $grow={706} /><RailRest $grow={113} /><Tri size={8} color="#505050" /></Rail>
      </Console>
      <AwsFooter>
        <Inline $gap={5}><ShellIcon size={15} /><a href="#shell">CloudShell</a></Inline>
        <a href="#feedback">Feedback</a>
        <Spacer />
        <span>© 2023, Amazon Web Services, Inc. or its affiliates.</span>
        <a href="#privacy">Privacy</a>
        <a href="#terms">Terms</a>
        <a href="#cookies">Cookie preferences</a>
      </AwsFooter>
    </>
  );
}

/* ---------- Clock ---------- */

const Clock = styled.section`
  position: absolute;
  left: 994px;
  top: 448px;
  width: 728px;
  height: 508px;
  border-radius: 8px;
  box-shadow: 0 18px 34px rgba(0, 0, 0, 0.34), 0 0 16px rgba(0, 0, 0, 0.16);
`;

const ClockFrame = styled.div`
  display: flex;
  height: 100%;
  overflow: hidden;
  border: 1px solid #a5a7ab;
  border-radius: 8px;
  background: linear-gradient(100deg, #f8f9fd 60%, #f5fafd);
  color: #1b1b1b;
`;

const ClockNav = styled.nav`
  display: flex;
  flex-direction: column;
  align-items: center;
  gap: 4px;
  width: 49px;
  padding-bottom: 4px;
  border-right: 1px solid #e6e9ef;
  background: #f0f3fa;
`;

const ClockTab = styled.button`
  display: flex;
  align-items: center;
  justify-content: center;
  width: 39px;
  height: ${(p) => (p.$first ? 34 : 36)}px;
  border-radius: 4px;
  background: ${(p) => (p.$on ? "linear-gradient(#0067c0, #0067c0) 0 50% / 3px 16px no-repeat #e6e9ef" : "none")};
`;

const Initials = styled.button`
  width: 24px;
  height: 24px;
  margin-bottom: 8px;
  border-radius: 50%;
  background: #dcdee3;
  font-size: 9px;
  font-weight: 700;
`;

const ClockBody = styled.div`
  display: flex;
  flex: 1;
  flex-direction: column;
  align-items: center;
`;

const ClockTitle = styled.header`
  display: flex;
  align-self: stretch;
  align-items: flex-start;
  height: 38px;
`;

const ClockName = styled.div`
  display: flex;
  align-items: center;
  gap: 14px;
  height: 38px;
  padding-left: 7px;
`;

const Face = styled.div`
  padding: 68px 8px 0 0;
`;

const FaceTools = styled.div`
  display: flex;
  justify-content: flex-end;
  gap: 24px;
  height: 16px;
  padding-right: 4px;
`;

const Digits = styled.div`
  display: grid;
  grid-template-columns: repeat(6, auto);
  align-items: baseline;
  justify-items: center;
  font-family: "Noto Sans CJK SC", "Open Sans", sans-serif;
  font-size: 104px;
  line-height: 86px;
`;

const Hundredths = styled.span`
  font-size: 77px;
  line-height: 60px;
`;

const Unit = styled.span`
  grid-column: ${(p) => p.$col};
  margin-top: 19px;
  font-family: "Open Sans", sans-serif;
  font-size: 19px;
  line-height: 24px;
`;

const ClockControls = styled.div`
  display: flex;
  gap: 26px;
  margin-top: 43px;
`;

const RoundButton = styled.button`
  display: flex;
  align-items: center;
  justify-content: center;
  width: 66px;
  height: 66px;
  border: 1px solid ${(p) => (p.$main ? "#0067c0" : "#e4e5e9")};
  border-bottom-color: ${(p) => (p.$main ? "#0067c0" : "#cccdd1")};
  border-radius: 50%;
  background: ${(p) => (p.$main ? "#0067c0" : "#fdfdfe")};
`;

function ClockWindow() {
  return (
    <Clock>
      <ClockFrame>
        <ClockNav>
          <ClockTab $first aria-label="Menu"><Stroke size={14} w={1.2}><path d="M1 2.5h14M1 8h14M1 13.5h14" /></Stroke></ClockTab>
          <ClockTab aria-label="Focus"><Stroke w={1.3}><circle cx="8" cy="8" r="7" strokeDasharray="5 1.2" /><circle cx="8" cy="8" r="4.5" /><path d="M8 4a4 4 0 0 1 0 8z" fill="currentColor" /></Stroke></ClockTab>
          <ClockTab aria-label="Timer"><Stroke w={1.1}><path d="M3 1h10M3 15h10M4 1c0 4 2.5 5 2.5 7S4 11 4 15M12 1c0 4-2.5 5-2.5 7s2.5 3 2.5 7" /></Stroke></ClockTab>
          <ClockTab aria-label="Alarm"><Stroke w={1.2}><path d="M8 1a5 5 0 0 0-5 5v4l-1 2.5h12L13 10V6a5 5 0 0 0-5-5zM6.5 13c0 2 3 2 3 0" /></Stroke></ClockTab>
          <ClockTab $on aria-label="Stopwatch"><Stroke w={1.2}><circle cx="8" cy="9" r="6" /><path d="M8 5.5V9M6 1h4M13 3l1 1" /></Stroke></ClockTab>
          <ClockTab aria-label="World clock"><Stroke w={1.1}><circle cx="8" cy="8" r="7" /><path d="M9 1L6 6l2 2-4 2-1 3M8 8l4 1 1 4M8 8l-1 7M10 2l1 3 3 1" /></Stroke></ClockTab>
          <Spacer />
          <Initials>BF</Initials>
          <ClockTab aria-label="Settings"><GearIcon size={16} w={1.2} /></ClockTab>
        </ClockNav>
        <ClockBody>
          <ClockTitle>
            <ClockName>
              <svg width="16" height="16" viewBox="0 0 16 16" aria-hidden="true"><path d="M1 4a4 4 0 0 1 4-3h6a4 4 0 0 1 4 3v11H1z" fill="#6f7a83" /><circle cx="8" cy="7.5" r="6" fill="#f1f1ee" /><path d="M5 4l3 3.5L11 4" stroke="#333" fill="none" /><path d="M8 7.5V13" stroke="#d9541e" /></svg>
              Clock
            </ClockName>
            <Spacer />
            <WinButton $h={32} aria-label="Minimize"><MinIcon /></WinButton>
            <WinButton $h={32} aria-label="Maximize"><MaxIcon /></WinButton>
            <WinButton $h={32} aria-label="Close"><CrossIcon size={12} /></WinButton>
          </ClockTitle>
          <Face>
            <FaceTools>
              <button aria-label="Expand"><Stroke w={1.1}><path d="M2 14L14 2M9 1.5h5.5V7M1.5 9v5.5H7" /></Stroke></button>
              <button aria-label="Keep on top"><Stroke w={1.1}><path d="M1 6V3a2 2 0 0 1 2-2h10a2 2 0 0 1 2 2v10a2 2 0 0 1-2 2h-2M9 1v6h6M1.5 14.5L7 9M3 9h4v4" /></Stroke></button>
            </FaceTools>
            <Digits>
              <span>00</span><span>:</span><span>02</span><span>:</span><span>23</span><Hundredths>.93</Hundredths>
              <Unit $col={1}>hr</Unit><Unit $col={3}>min</Unit><Unit $col={5}>sec</Unit>
            </Digits>
          </Face>
          <ClockControls>
            <RoundButton $main aria-label="Pause"><svg width="24" height="24" viewBox="0 0 24 24" fill="#fff"><rect x="1" y="1" width="9" height="22" rx="2.5" /><rect x="14" y="1" width="9" height="22" rx="2.5" /></svg></RoundButton>
            <RoundButton aria-label="Lap"><svg width="24" height="24" viewBox="0 0 24 24"><path d="M3 1h19l-4 8 4 8H4v7H2V1z" fill="#1b1b1b" /></svg></RoundButton>
            <RoundButton aria-label="Reset"><Stroke size={24} box={24} w={1.8}><path d="M7 1L1 6l6 5M1 6h12a9 9 0 1 1-9 9" /></Stroke></RoundButton>
          </ClockControls>
        </ClockBody>
      </ClockFrame>
    </Clock>
  );
}

function ChromeWindow() {
  return (
    <Chrome>
      <TabStrip>
        {tabs.map(([icon, title, kind, fade]) => (
          <Tab key={title} $active={kind === "active"} $plain={kind === "plain"}>
            {icon}<TabTitle $fade={fade}>{title}</TabTitle><TabClose $near={kind === "active"} aria-label={`Close ${title}`}><CrossIcon size={9} w={1.8} /></TabClose>
          </Tab>
        ))}
        <NewTab aria-label="New tab"><Stroke size={13} w={2.4}><path d="M8 1v14M1 8h14" /></Stroke></NewTab>
        <Spacer />
        <WinButton aria-label="Search tabs"><Stroke size={11} w={1.3}><path d="M1 3l7 9 7-9" /></Stroke></WinButton>
        <WinButton aria-label="Minimize"><MinIcon /></WinButton>
        <WinButton aria-label="Restore"><RestoreIcon /></WinButton>
        <WinButton aria-label="Close"><CrossIcon size={13} /></WinButton>
      </TabStrip>
      <AddressBar>
        <NavButton aria-label="Back"><Stroke w={2}><path d="M8 2L2 8l6 6M2 8h13" /></Stroke></NavButton>
        <NavButton $dim aria-label="Forward"><Stroke w={2}><path d="M8 2l6 6-6 6M14 8H1" /></Stroke></NavButton>
        <NavButton aria-label="Reload"><Stroke w={2}><path d="M14 9a6 6 0 1 1-1.5-5l1 1.5M14 1v5H9" /></Stroke></NavButton>
        <NavButton aria-label="Home"><Stroke w={2}><path d="M1.5 8L8 1.5 14.5 8M3.5 7v8h3v-4h3v4h3V7" /></Stroke></NavButton>
        <Omnibox>
          <svg width="14" height="14" viewBox="0 0 14 14" aria-hidden="true"><rect x="2" y="5" width="10" height="8" rx="1" fill="#5f6368" /><path d="M4.5 5V3.5a2.5 2.5 0 0 1 5 0V5" stroke="#5f6368" strokeWidth="1.5" fill="none" /></svg>
          <Url href="#instances"><b>us-east-1.console.aws.amazon.com</b>/ec2/home?region=us-east-1#Instances:v=3;$case=tags:true%5C,client:false;$regex=tags:false%5C,client:false;sort=instanceState</Url>
          <NavButton aria-label="Share"><Stroke w={1.5}><path d="M1 5v10h12v-4M10 1l5 4-5 4V7c-3 0-5 1-6 4 0-4 2-7 6-8z" /></Stroke></NavButton>
          <NavButton aria-label="Bookmark"><Stroke w={1.6}><path d="M8 1.5l2 4.5 4.8.4-3.6 3.2 1.1 4.7L8 11.8l-4.3 2.5 1.1-4.7L1.2 6.4 6 6z" /></Stroke></NavButton>
        </Omnibox>
        <NavButton aria-label="Sync extension"><Stroke w={2}><path d="M5 2a7 7 0 0 0 0 12M11 14a7 7 0 0 0 0-12M2 2h4v3M14 14h-4v-3" /><circle cx="8" cy="8" r="1.5" /></Stroke></NavButton>
        <NavButton aria-label="Extension"><svg width="16" height="16" viewBox="0 0 16 16"><rect x="1" y="1" width="14" height="14" rx="3" fill="#5a5a5a" /><ellipse cx="6" cy="6" rx="2" ry="3" fill="#bbb" /><ellipse cx="10" cy="5" rx="2" ry="3" fill="#999" /><circle cx="11" cy="12" r="3" fill="#eee" /></svg></NavButton>
        <NavButton aria-label="Extensions"><svg width="18" height="18" viewBox="0 0 18 18" fill="#5f6368"><path d="M2 5h4c-1-5 5-5 4 0h4v4c4-1 4 5 0 4v4h-4c1-4-5-4-4 0H2v-4c3 0 3-4 0-4z" /></svg></NavButton>
        <NavButton aria-label="Side panel"><svg width="16" height="16" viewBox="0 0 16 16"><path d="M2 2h12v12H2z" fill="none" stroke="#5f6368" strokeWidth="2" /><path d="M9 2h5v12H9z" fill="#5f6368" /></svg></NavButton>
        <Avatar />
        <UpdateButton>Update<svg width="4" height="16" viewBox="0 0 4 16" fill="#c5221f" aria-hidden="true"><circle cx="2" cy="2" r="2" /><circle cx="2" cy="8" r="2" /><circle cx="2" cy="14" r="2" /></svg></UpdateButton>
      </AddressBar>
      <Bookmarks>
        {bookmarks.map(([name, icon]) => <Bookmark key={name} href={`#${name}`}>{icon || <FolderIcon />}{name}</Bookmark>)}
      </Bookmarks>
      <AwsConsole />
      <ClockWindow />
    </Chrome>
  );
}

export default function App() {
  return (
    <>
      <GlobalStyle />
      <Desktop>
        <JMeterWindow />
        <WordWindow />
        <ChromeWindow />
      </Desktop>
    </>
  );
}
